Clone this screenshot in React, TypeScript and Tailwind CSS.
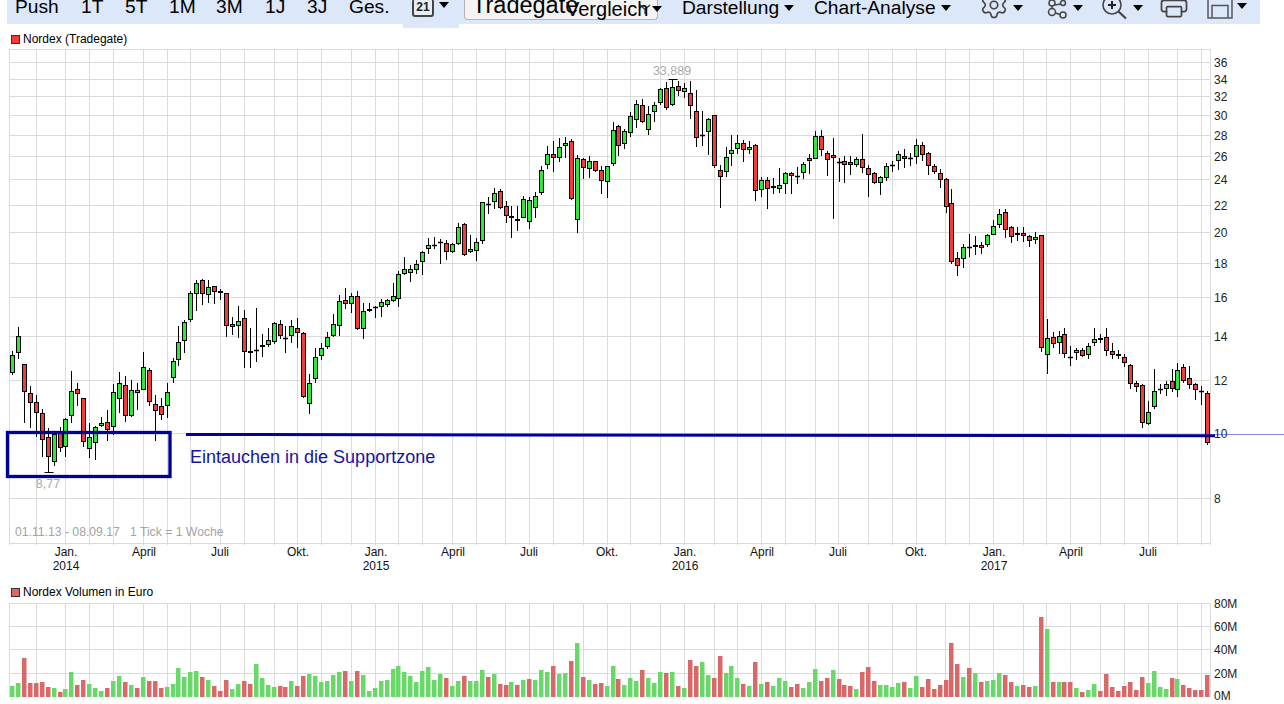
import { Printer, Settings } from 'lucide-react';

// candles: [high, body top, body bottom, low, up], all in page pixels
const candles: number[][] = [
  [351,355,373,375,1],[327,336,353,359,1],[364,364,392,423,0],[386,393,403,428,0],[395,402,413,437,0],
  [409,413,440,457,0],[428,437,457,472,0],[433,434,462,466,1],[427,433,448,452,0],[418,419,447,457,1],
  [371,391,416,423,1],[383,389,394,406,0],[398,398,442,447,0],[423,437,449,458,1],[426,427,443,460,1],
  [417,423,426,427,1],[410,422,430,441,0],[384,392,427,435,1],[372,383,399,413,1],[376,385,416,422,0],
  [380,390,416,417,1],[383,390,393,410,1],[352,367,390,390,1],[368,370,402,406,0],[395,404,411,441,0],
  [398,406,415,420,0],[383,392,406,418,1],[358,361,378,383,1],[326,342,360,366,1],[320,322,341,353,1],
  [291,293,320,322,1],[280,283,294,311,1],[279,280,294,305,0],[280,287,295,303,1],[286,286,292,304,0],
  [289,291,293,300,0],[293,293,326,337,0],[317,324,327,335,0],[306,321,326,338,1],[310,318,352,368,0],
  [328,351,353,368,0],[308,350,350,362,1],[334,345,347,357,1],[328,340,345,347,1],[322,323,342,344,1],
  [320,324,336,339,0],[326,338,338,353,1],[320,326,336,343,1],[318,328,333,348,0],[332,333,397,398,0],
  [374,383,404,414,1],[348,357,379,383,1],[343,348,356,360,1],[332,337,347,349,1],[314,324,336,337,1],
  [295,301,326,336,1],[288,300,304,309,0],[293,296,304,313,1],[291,296,329,330,0],[303,311,329,339,1],
  [303,309,311,312,1],[306,307,307,318,1],[299,302,307,317,1],[299,300,305,307,1],[283,296,301,302,1],
  [271,274,299,307,1],[257,269,274,275,1],[265,269,273,282,1],[260,264,270,274,1],[251,252,262,275,1],
  [238,245,249,254,1],[237,245,245,249,1],[239,242,242,264,1],[240,243,252,260,0],[243,244,252,253,1],
  [223,227,244,245,1],[223,224,255,256,0],[235,249,252,253,1],[238,242,251,261,1],[202,202,241,244,1],
  [197,204,204,214,1],[188,193,202,209,1],[189,191,208,209,0],[201,206,216,223,0],[206,216,218,238,1],
  [206,219,221,231,0],[196,199,218,218,1],[197,200,222,229,1],[192,196,208,218,1],[166,170,193,195,1],
  [146,154,165,169,1],[141,154,158,172,0],[138,147,158,162,1],[137,143,146,158,1],[139,141,199,200,0],
  [155,158,220,233,1],[158,159,168,179,0],[156,161,169,178,1],[161,161,171,172,0],[166,170,181,194,0],
  [166,166,182,198,1],[122,130,164,166,1],[125,126,146,156,0],[129,131,144,149,1],[112,116,133,137,1],
  [100,104,120,128,1],[99,105,122,123,0],[106,114,130,135,1],[102,105,112,122,1],[88,89,103,105,1],
  [82,88,108,110,0],[79,87,105,106,1],[81,86,91,96,0],[83,88,92,98,1],[81,93,106,119,0],
  [90,111,138,147,0],[111,135,135,146,1],[118,119,132,155,1],[115,115,166,168,0],[165,170,177,208,0],
  [147,157,172,177,1],[135,150,154,166,1],[135,143,149,154,1],[140,143,150,162,0],[141,147,150,154,1],
  [144,145,191,201,0],[177,180,190,197,1],[177,180,189,209,0],[178,186,188,194,1],[168,185,189,193,1],
  [172,173,184,194,1],[172,173,176,194,0],[167,176,176,184,1],[162,164,173,179,1],[154,158,161,174,0],
  [131,136,159,159,1],[130,136,150,156,0],[151,153,160,176,0],[138,155,158,219,0],[158,162,162,182,1],
  [156,161,165,183,0],[156,162,165,175,0],[157,159,165,167,1],[134,159,168,173,0],[165,168,175,197,0],
  [172,173,183,184,0],[176,177,183,195,1],[163,166,178,181,1],[161,165,165,172,1],[151,154,161,170,1],
  [149,156,159,168,0],[153,158,158,166,1],[139,145,157,164,1],[142,145,155,161,0],[152,153,166,175,0],
  [164,166,172,174,0],[169,173,180,188,0],[178,179,207,213,0],[189,203,262,264,0],[252,258,266,276,0],
  [244,247,259,268,1],[234,247,247,257,1],[236,245,247,255,1],[242,245,248,254,0],[234,235,245,247,1],
  [220,226,235,235,1],[209,214,225,228,1],[209,212,230,238,0],[226,227,237,243,0],[227,233,235,241,1],
  [227,233,236,242,0],[235,236,241,247,0],[232,237,240,244,1],[235,235,348,352,0],[319,338,355,374,1],
  [332,337,344,348,0],[331,336,343,354,1],[328,334,354,358,0],[346,357,357,366,1],[348,350,353,360,1],
  [348,350,356,357,0],[343,346,355,359,1],[328,339,343,346,1],[334,338,340,343,0],[328,337,351,356,0],
  [343,351,355,359,0],[350,354,356,359,0],[354,357,363,367,0],[364,365,384,389,0],[381,383,387,392,0],
  [384,385,423,428,0],[401,412,424,425,1],[369,391,407,409,1],[384,389,389,394,1],[381,384,389,396,1],
  [369,381,389,392,0],[363,370,390,397,1],[364,367,381,383,0],[366,378,385,389,0],[383,384,390,400,0],
  [386,391,391,405,1],[391,393,443,445,0],
];

// volume bar heights in px, negative = down week
const volumes: number[] = [
  11,14,-39,-14,-14,-15,-10,9,-5,8,25,-12,-17,13,9,6,-9,16,21,-15,12,-9,20,-16,-16,-9,10,13,29,20,25,26,-20,17,-11,-6,-17,8,13,-16,-13,33,19,12,10,-11,-10,16,-11,-21,23,21,15,
  16,22,25,-26,16,-26,22,6,9,16,17,28,31,25,21,15,26,30,17,23,-19,11,16,-21,16,16,27,-20,23,-13,
  -12,15,-12,17,-18,17,27,25,-31,23,24,-36,54,-20,17,-13,-14,11,31,-18,12,19,16,-27,19,14,25,-24,25,-11,
  9,-37,-31,35,22,-19,-41,24,31,19,-13,11,-35,13,-15,11,19,16,-10,-13,9,15,28,-16,-19,27,-18,-12,-11,8,
  -25,-30,-16,12,12,10,14,-15,9,21,-10,-18,-8,-12,-17,-54,-33,
  20,-29,24,-15,16,17,24,-22,-15,11,-12,-10,11,-80,68,-15,15,-15,-15,9,-5,7,13,-6,-23,-10,-6,-11,-15,-7,-20,14,26,10,8,-19,18,-12,-9,-7,-7,-22,
];

const gridX = [9,36,65,89,113,143,167,190,220,244,274,297,321,351,375,398,422,452,476,505,529,553,583,607,630,660,684,714,737,761,785,815,838,868,892,916,945,969,993,1023,1046,1070,1100,1124,1148,1177,1201,1210];
const priceTicks: [string, number][] = [['36',62],['34',79],['32',96],['30',115],['28',135],['26',156],['24',179],['22',205],['20',232],['18',263],['16',297],['14',336],['12',380],['10',433],['8',498]];
const months: [string, number][] = [['Jan.',66],['April',144],['Juli',220],['Okt.',298],['Jan.',376],['April',453],['Juli',529],['Okt.',607],['Jan.',685],['April',762],['Juli',838],['Okt.',916],['Jan.',994],['April',1071],['Juli',1148]];
const years: [string, number][] = [['2014',66],['2015',376],['2016',685],['2017',994]];
const volumeTicks: [string, number][] = [['80M',603],['60M',626],['40M',649],['20M',673],['0M',695]];

const barX = (i: number) => Math.round(11.95 + i * 5.9465) + 0.5;

const font = { fontFamily: '"Liberation Sans", Arial, sans-serif' };

function Caret() {
  return <span className="block w-0 h-0 border-x-[5.5px] border-x-transparent border-t-[6px] border-t-black" />;
}

function Toolbar() {
  return (
    <div className="ml-[7px] w-[1253px] h-[24px] bg-[#dce8f9] flex items-start pl-[8px] text-[19.2px] leading-[20px] text-black">
      <span className="w-[66px] -mt-[3px]">Push</span>
      <span className="w-[44px] -mt-[3px]">1T</span>
      <span className="w-[44px] -mt-[3px]">5T</span>
      <span className="w-[47px] -mt-[3px]">1M</span>
      <span className="w-[49px] -mt-[3px]">3M</span>
      <span className="w-[42px] -mt-[3px]">1J</span>
      <span className="w-[42px] -mt-[3px]">3J</span>
      <span className="w-[54px] -mt-[3px]">Ges.</span>

      {/* date range tab */}
      <div className="w-[56px] h-[28px] bg-[#dce8f9] flex items-start pl-[9px] gap-[5px] shrink-0">
        <div className="w-[22px] h-[18px] -mt-[1px] border-2 border-[#444] rounded-[3px] border-t-0 bg-[#e8edf4] flex items-center justify-center text-[12px] leading-none font-bold text-[#222]">
          21
        </div>
        <span className="mt-[2px]"><Caret /></span>
      </div>

      {/* exchange select, its text runs under Vergleich */}
      <div className="relative ml-[5px] w-[194px] h-[20px] -mr-[92px] shrink-0 bg-[#f4f4f4] border border-t-0 border-[#b4b4b4] rounded-b-[4px] pl-[7px] overflow-hidden">
        <span className="block text-[23.5px] leading-[24px] -mt-[7px]">Tradegate</span>
        <svg width="12" height="10" viewBox="0 0 12 10" className="absolute left-[174px] top-[4px]">
          <path d="M1 1l5 4.500 5-4.500M6 5.500V10" fill="none" stroke="#333" strokeWidth="1.300" />
        </svg>
      </div>
      <span className="relative w-[86px] -mt-[1px] shrink-0 text-[20px]">Vergleich</span>
      <span className="relative mt-[6px] mr-[20px]"><Caret /></span>

      <span className="w-[102px] -mt-[2px] shrink-0">Darstellung</span>
      <span className="mt-[5px] mr-[20px]"><Caret /></span>
      <span className="w-[127px] -mt-[2px] shrink-0">Chart-Analyse</span>
      <span className="mt-[5px] mr-[28px]"><Caret /></span>

      <Settings size={30} strokeWidth={1.3} className="text-[#444] -mt-[10px] w-[30px] shrink-0 mr-[4px]" />
      <span className="mt-[5px] mr-[23px]"><Caret /></span>

      <svg width="23" height="20" viewBox="0 0 23 20" className="shrink-0 mr-[4px]" fill="none" stroke="#444" strokeWidth="1.500">
        <circle cx="6" cy="3" r="3" />
        <circle cx="17" cy="3" r="2.500" />
        <circle cx="6" cy="12" r="3.500" />
        <circle cx="17" cy="15" r="3" />
        <path d="M6 6v2.500M8.500 5L15 4M9.500 13l4.500 1.500" />
      </svg>
      <span className="mt-[5px] mr-[19px]"><Caret /></span>

      <svg width="26" height="20" viewBox="0 0 26 20" className="shrink-0 mr-[5px]" fill="none" stroke="#444" strokeWidth="1.600">
        <circle cx="10" cy="5" r="9" />
        <path d="M16.500 11.500L24 18.500" strokeWidth="2.200" />
        <path d="M10 1v8M6 5h8" stroke="#222" strokeWidth="2" />
      </svg>
      <span className="mt-[5px] mr-[16px]"><Caret /></span>

      <Printer size={30} strokeWidth={1.4} className="text-[#444] -mt-[11px] w-[30px] shrink-0 mr-[18px]" />

      <svg width="26" height="20" viewBox="0 0 26 20" className="shrink-0 mr-[4px]" fill="none" stroke="#555" strokeWidth="1.500">
        <path d="M1 -3h24v21H1z" />
        <path d="M5 18V5.500h16V18" />
      </svg>
      <span className="mt-[3px]"><Caret /></span>
    </div>
  );
}

function Legend({ color, label }: { color: string; label: string }) {
  return (
    <div className="flex items-center gap-[3px] pl-[11px] text-[12px] leading-[14px] text-black">
      <span className={`w-[9px] h-[9px] border border-[#333] ${color}`} />
      <span>{label}</span>
    </div>
  );
}

function PriceChart() {
  return (
    <svg viewBox="0 49 1284 525" className="block w-[1284px] h-[525px]" style={font}>
      {gridX.map((x) => (
        <line key={x} x1={x + 0.5} x2={x + 0.5} y1={49.5} y2={545} stroke="#dadada" />
      ))}
      {[49, ...priceTicks.map((t) => t[1]), 543].map((y) => (
        <line key={y} x1={9} x2={1211} y1={y + 0.5} y2={y + 0.5} stroke="#dadada" />
      ))}

      {candles.map(([hi, top, bot, lo, up], i) => {
        const x = barX(i);
        return (
          <g key={i} stroke="#000">
            <line x1={x} x2={x} y1={hi} y2={lo} />
            {bot > top ? (
              <rect x={x - 2} y={top + 0.5} width={4} height={bot - top - 1} fill={up ? '#2ee83a' : '#f23c3c'} />
            ) : (
              <line x1={x - 2.5} x2={x + 2.5} y1={top + 0.5} y2={top + 0.5} strokeWidth={1.5} />
            )}
          </g>
        );
      })}
      {/* high and low markers */}
      <line x1={barX(111) - 4} x2={barX(111) + 5} y1={79.5} y2={79.5} stroke="#000" />
      <line x1={barX(6) - 4} x2={barX(6) + 5} y1={472.5} y2={472.5} stroke="#000" />

      <g fill="#aaa" fontSize="12.500">
        <text x={672} y={75} textAnchor="middle">33,889</text>
        <text x={48} y={488} textAnchor="middle">8,77</text>
      </g>
      <text x={15} y={536} fontSize="12.200" fill="#a3a3a3" xmlSpace="preserve">01.11.13 - 08.09.17   1 Tick = 1 Woche</text>

      {/* drawn support zone */}
      <rect x={7.5} y={432.5} width={162.5} height={44} fill="none" stroke="#000099" strokeWidth={3.3} />
      <line x1={186} x2={1215} y1={434.500} y2={435.800} stroke="#000099" strokeWidth={3} />
      <line x1={1215} x2={1284} y1={434.500} y2={434.500} stroke="#8a8ae0" />
      <text x={190} y={463} fontSize="18" fill="#1414a0">Eintauchen in die Supportzone</text>

      <g fontSize="12" fill="#222">
        {priceTicks.map(([label, y]) => (
          <text key={label} x={1214} y={y + 5}>{label}</text>
        ))}
      </g>
      <g fontSize="12" fill="#111" textAnchor="middle">
        {months.map(([label, x]) => (
          <text key={x} x={x} y={556}>{label}</text>
        ))}
        {years.map(([label, x]) => (
          <text key={x} x={x} y={570}>{label}</text>
        ))}
      </g>
    </svg>
  );
}

function VolumeChart() {
  return (
    <svg viewBox="0 603 1284 101" className="block w-[1284px] h-[101px] overflow-visible" style={font}>
      {gridX.map((x) => (
        <line key={x} x1={x + 0.5} x2={x + 0.5} y1={603.5} y2={697} stroke="#dadada" />
      ))}
      {volumeTicks.slice(0, 4).map(([label, y]) => (
        <line key={label} x1={9} x2={1211} y1={y + 0.5} y2={y + 0.5} stroke="#dadada" />
      ))}
      {volumes.map((v, i) => {
        const h = Math.abs(v);
        return <rect key={i} x={barX(i) - 2.5} y={697 - h} width={4.500} height={h} fill={v > 0 ? '#68d968' : '#d96868'} />;
      })}
      <g fontSize="12" fill="#222">
        {volumeTicks.map(([label, y]) => (
          <text key={label} x={1214} y={y + 5}>{label}</text>
        ))}
      </g>
    </svg>
  );
}

export default function App() {
  return (
    <div className="w-[1284px] h-[704px] overflow-hidden bg-white" style={font}>
      <Toolbar />
      <div className="h-[25px] pt-[8px]">
        <Legend color="bg-[#f23c3c]" label="Nordex (Tradegate)" />
      </div>
      <PriceChart />
      <div className="h-[29px] pt-[11px]">
        <Legend color="bg-[#d96868]" label="Nordex Volumen in Euro" />
      </div>
      <VolumeChart />
    </div>
  );
}
